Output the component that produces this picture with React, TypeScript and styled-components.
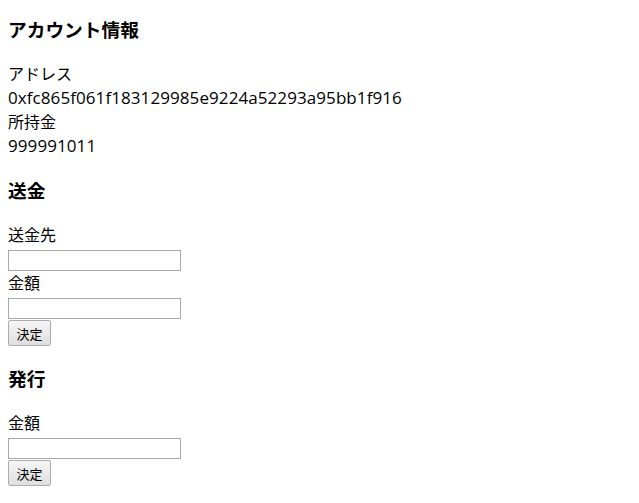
import React from "react";
import styled, { createGlobalStyle } from "styled-components";

const Global = createGlobalStyle`
  body {
    margin: 8px;
    font-family: "Open Sans", "Noto Sans CJK JP", sans-serif;
    font-size: 16px;
    line-height: 24px;
    color: #000;
    background: #fff;
  }
`;

const Page = styled.div`
  display: flex;
  flex-direction: column;
`;

const Heading = styled.h3`
  font-size: 18.72px;
  font-weight: bold;
  line-height: 28px;
  margin: 8px 0 18px;
`;

const Line = styled.div<{ $latin?: boolean }>`
  height: 24px;
  ${(p) =>
    p.$latin &&
    `
    font-size: 17px;
    letter-spacing: 0.08px;
  `}
`;

const Field = styled.input`
  display: block;
  box-sizing: border-box;
  width: 173px;
  height: 21px;
  margin: 3px 0 0;
  padding: 1px 2px;
  border: 1px solid #a9a9a9;
  font-size: 13px;
`;

const Button = styled.button`
  align-self: flex-start;
  box-sizing: border-box;
  width: 43px;
  height: 26px;
  margin-top: 1px;
  padding: 0;
  border: 1px solid #adadad;
  border-radius: 2px;
  background: linear-gradient(#f6f6f6, #dedede);
  font-family: "Noto Sans CJK JP", sans-serif;
  font-size: 13px;
  line-height: 1;
  color: #000;
`;

const Section = styled.section`
  display: flex;
  flex-direction: column;
  margin-bottom: 11px;
`;

const App = () => {
  return (
    <Page>
      <Global />
      <Section>
        <Heading>アカウント情報</Heading>
        <Line>アドレス</Line>
        <Line $latin>0xfc865f061f183129985e9224a52293a95bb1f916</Line>
        <Line>所持金</Line>
        <Line $latin>999991011</Line>
      </Section>
      <Section>
        <Heading>送金</Heading>
        <Line>送金先</Line>
        <Field type="text" />
        <Line>金額</Line>
        <Field type="text" />
        <Button>決定</Button>
      </Section>
      <Section>
        <Heading>発行</Heading>
        <Line>金額</Line>
        <Field type="text" />
        <Button>決定</Button>
      </Section>
    </Page>
  );
};

export default App;
